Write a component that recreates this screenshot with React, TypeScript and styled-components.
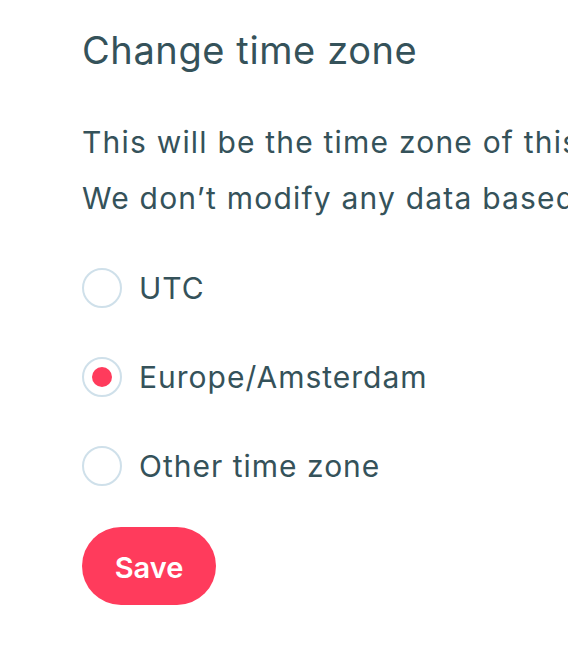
import React, {useState} from 'react';
import styled, {createGlobalStyle} from 'styled-components';

const GlobalStyle = createGlobalStyle`
  html, body {
    margin: 0;
    padding: 0;
    background: #ffffff;
    overflow: hidden;
  }
  body {
    font-family: 'Inter', 'Noto Sans', sans-serif;
    color: #35525a;
  }
`;

const Page = styled.div`
  width: 568px;
  height: 664px;
  overflow: hidden;
  padding: 26px 0 0 82px;
  box-sizing: border-box;
`;

const Title = styled.h1`
  margin: 0 0 40px;
  font-size: 38px;
  line-height: 48px;
  font-weight: 400;
  letter-spacing: 0.6px;
  white-space: nowrap;
`;

const Paragraph = styled.p`
  margin: 0;
  font-size: 30px;
  line-height: 56px;
  font-weight: 400;
  letter-spacing: 1.2px;
  white-space: nowrap;
`;

const Options = styled.div`
  display: flex;
  flex-direction: column;
  gap: 49px;
  margin-top: 42px;
`;

const Option = styled.label`
  display: flex;
  align-items: center;
  gap: 17px;
  height: 40px;
  font-size: 30px;
  letter-spacing: 1px;
  cursor: pointer;
  white-space: nowrap;
`;

const Radio = styled.span<{$checked: boolean}>`
  width: 40px;
  height: 40px;
  box-sizing: border-box;
  border-radius: 50%;
  border: 2px solid #cfe0ea;
  display: flex;
  align-items: center;
  justify-content: center;
  flex-shrink: 0;

  &::after {
    content: '';
    width: 20px;
    height: 20px;
    border-radius: 50%;
    background: #ff3b5c;
    display: ${(p) => (p.$checked ? 'block' : 'none')};
  }
`;

const SaveButton = styled.button`
  margin-top: 41px;
  width: 134px;
  height: 78px;
  border: none;
  border-radius: 39px;
  background: #ff3b5c;
  color: #ffffff;
  font-family: 'Inter', 'Noto Sans', sans-serif;
  font-size: 29px;
  font-weight: 600;
  padding-top: 3px;
  cursor: pointer;
`;

const zones = ['UTC', 'Europe/Amsterdam', 'Other time zone'];

export default function App() {
  const [zone, setZone] = useState('Europe/Amsterdam');

  return (
    <Page>
      <GlobalStyle />
      <Title>Change time zone</Title>
      <Paragraph>This will be the time zone of this account.</Paragraph>
      <Paragraph>We don’t modify any data based on the time zone.</Paragraph>
      <Options>
        {zones.map((z) => (
          <Option key={z} onClick={() => setZone(z)}>
            <Radio $checked={zone === z} />
            {z}
          </Option>
        ))}
      </Options>
      <SaveButton>Save</SaveButton>
    </Page>
  );
}
